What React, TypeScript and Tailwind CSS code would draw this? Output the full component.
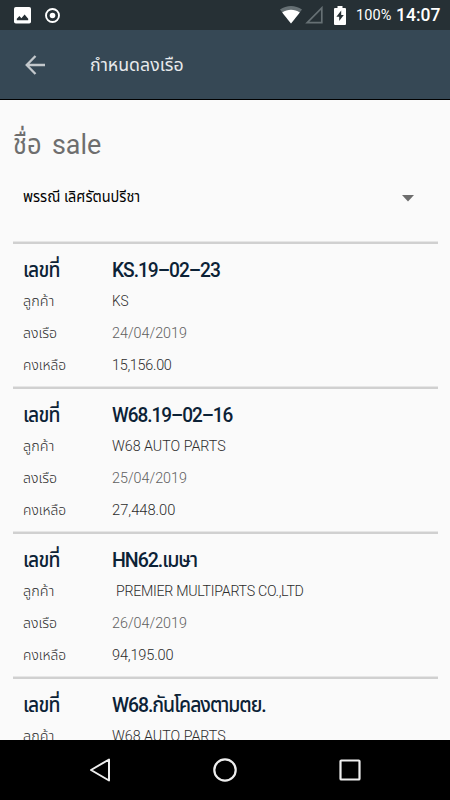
import clsx from 'clsx';

interface Shipment {
  code: string;
  codeClass?: string;
  customer: string;
  customerClass?: string;
  date?: string;
  balance?: string;
  balanceClass?: string;
}

const shipments: Shipment[] = [
  {
    code: 'KS.19–02–23',
    codeClass: 'scale-x-[0.936]',
    customer: 'KS',
    customerClass: 'scale-x-[0.91]',
    date: '24/04/2019',
    balance: '15,156.00',
    balanceClass: 'tracking-[-0.3px] scale-x-[0.96]',
  },
  {
    code: 'W68.19–02–16',
    codeClass: 'scale-x-[0.925]',
    customer: 'W68 AUTO PARTS',
    customerClass: 'scale-x-[0.95]',
    date: '25/04/2019',
    balance: '27,448.00',
    balanceClass: 'scale-x-[0.98]',
  },
  {
    code: 'HN62.เมษา',
    codeClass: 'scale-x-[0.954]',
    customer: 'PREMIER MULTIPARTS CO.,LTD',
    customerClass: 'ml-[4px] tracking-[-0.3px] scale-x-[0.947]',
    date: '26/04/2019',
    balance: '94,195.00',
    balanceClass: 'tracking-[-0.2px] scale-x-[0.975]',
  },
  {
    code: 'W68.กันโคลงตามตย.',
    codeClass: 'scale-x-[0.946]',
    customer: 'W68 AUTO PARTS',
    customerClass: 'scale-x-[0.95]',
  },
];

const StatusBar = () => (
  <header className="flex h-[30px] shrink-0 items-center bg-[#263035] pl-[14px] pr-[10px] text-white">
    <svg width="17" height="17" viewBox="0 0 17 17">
      <rect width="17" height="16.5" rx="1.8" fill="#fff" />
      <path d="M2.8 13.3v-1.5L5.4 9l2 2.3 3.2-3.8 3.6 4.3v1.5z" fill="#263035" />
    </svg>
    <svg className="ml-[14px]" width="15" height="15" viewBox="0 0 15 15">
      <circle cx="7.5" cy="7.5" r="6.5" fill="none" stroke="#fff" strokeWidth="1.9" />
      <circle cx="7.5" cy="7.5" r="2.8" fill="#fff" />
    </svg>
    <svg className="ml-auto" width="22" height="18" viewBox="0 0 22 18">
      <path d="M0 3.6C6.5-1.2 15.5-1.2 22 3.6L11 17.6z" fill="#667074" />
      <path d="M2.2 6.4C7.5 3 14.5 3 19.8 6.4L11 17.6z" fill="#fff" />
    </svg>
    <svg className="ml-[3px]" width="18" height="18" viewBox="0 0 18 18">
      <path d="M16.8 1.9v14.7H2.2z" fill="none" stroke="#667074" strokeWidth="1.7" />
    </svg>
    <svg className="ml-[11px]" width="12" height="19" viewBox="0 0 12 19">
      <path d="M3.5 0h5v2H11a1 1 0 0 1 1 1v15a1 1 0 0 1-1 1H1a1 1 0 0 1-1-1V3a1 1 0 0 1 1-1h2.5z" fill="#fff" />
      <path d="M7.2 4.5 2.4 10.7h2.8V15L9.8 9H7.2z" fill="#263035" />
    </svg>
    <span className="ml-[10px] w-[40px] whitespace-nowrap pt-[1px] text-[14.5px] tracking-[0.1px]">100%</span>
    <span className="w-[44px] whitespace-nowrap pt-[1px] text-[17.5px] font-medium">14:07</span>
  </header>
);

const AppBar = () => (
  <div className="flex h-[70px] shrink-0 items-center border-b border-black bg-[#364855] pl-[25px]">
    <svg width="21" height="20" viewBox="0 0 21 20" fill="none" stroke="#c3c8cc" strokeWidth="2.3">
      <path d="M20 10H2M10.5 1 1.7 10l8.8 9" />
    </svg>
    <h1 className="ml-[44px] origin-left scale-x-[0.985] text-[18px] text-[#e8eaec]">กำหนดลงเรือ</h1>
  </div>
);

interface FieldProps {
  label: string;
  labelClass: string;
  value: string;
  valueClass?: string;
}

const Field = ({ label, labelClass, value, valueClass }: FieldProps) => (
  <div className="flex h-[32px] items-center whitespace-nowrap text-[15px] font-light text-[#2c2c2c]">
    <dt className="w-[89px]">
      <span className={clsx('inline-block origin-left', labelClass)}>{label}</span>
    </dt>
    <dd className={clsx('origin-left', valueClass)}>{value}</dd>
  </div>
);

const ShipmentItem = ({ shipment }: { shipment: Shipment }) => (
  <dl className="h-[145px] shrink-0 border-t-[2px] border-[#d0d0d0] pl-[10px] pt-[11px] shadow-[0_-1px_0_#e6e6e6]">
    <div className="flex h-[30px] items-center whitespace-nowrap text-[20.5px] font-medium text-[#0c2236]">
      <dt className="w-[89px]">
        <span className="inline-block origin-left scale-x-[0.94] tracking-[-0.8px]">เลขที่</span>
      </dt>
      <dd className={clsx('origin-left tracking-[-1.1px]', shipment.codeClass)}>{shipment.code}</dd>
    </div>
    <Field
      label="ลูกค้า"
      labelClass="scale-x-[0.96]"
      value={shipment.customer}
      valueClass={shipment.customerClass}
    />
    {shipment.date && (
      <Field
        label="ลงเรือ"
        labelClass="scale-x-[0.94]"
        value={shipment.date}
        valueClass="scale-x-[0.955] text-[#606060]"
      />
    )}
    {shipment.balance && (
      <Field
        label="คงเหลือ"
        labelClass="scale-x-[0.92]"
        value={shipment.balance}
        valueClass={shipment.balanceClass}
      />
    )}
  </dl>
);

const NavigationBar = () => (
  <nav className="flex h-[60px] shrink-0 items-center bg-black pl-[89px]">
    <svg width="22" height="24" viewBox="0 0 22 24" fill="none" stroke="#eee" strokeWidth="2" strokeLinejoin="round">
      <path d="M20 1.5v21L2 12z" />
    </svg>
    <svg className="ml-[102px]" width="24" height="24" viewBox="0 0 24 24" fill="none" stroke="#eee" strokeWidth="2.2">
      <circle cx="12" cy="12" r="10.7" />
    </svg>
    <svg className="ml-[102px]" width="22" height="22" viewBox="0 0 22 22" fill="none" stroke="#eee" strokeWidth="2.2">
      <rect x="1.5" y="1.5" width="19" height="19" rx="0.8" />
    </svg>
  </nav>
);

const App = () => (
  <div className="flex h-[800px] w-[450px] flex-col overflow-hidden bg-[#fafafa] font-['Roboto','Noto_Sans_Thai','Noto_Sans',sans-serif]">
    <StatusBar />
    <AppBar />
    <main className="flex min-h-0 flex-1 flex-col overflow-hidden px-[12.5px]">
      <h2 className="flex h-[90px] shrink-0 items-center text-[28px] text-[#6e6e6e]">
        <span className="w-[39.5px]">
          <span className="inline-block origin-left scale-x-[0.91]">ชื่อ</span>
        </span>
        <span className="origin-left scale-x-[0.96]">sale</span>
      </h2>
      <button className="flex h-[52px] shrink-0 items-start justify-between pl-[10px] pr-[24px] text-[15px] text-black">
        <span className="mt-[-4px] origin-left scale-x-[0.965]">พรรณี เลิศรัตนปรีชา</span>
        <svg className="mt-[5px]" width="12" height="7" viewBox="0 0 12 7">
          <path d="M0 0h12L6 6.5z" fill="#6d6d6d" />
        </svg>
      </button>
      {shipments.map((shipment) => (
        <ShipmentItem key={shipment.code} shipment={shipment} />
      ))}
    </main>
    <NavigationBar />
  </div>
);

export default App;
